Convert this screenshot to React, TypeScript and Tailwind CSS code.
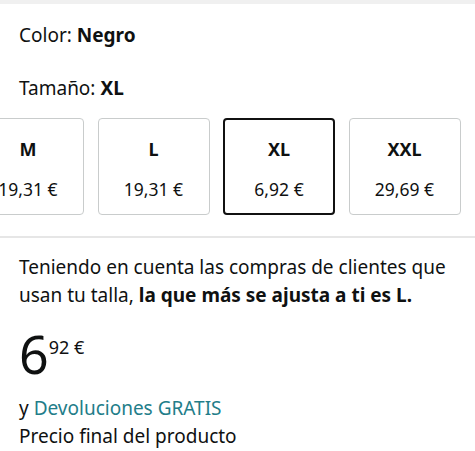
import React from "react";

const sizes = [
  { s: "M", p: "19,31 €", sel: false },
  { s: "L", p: "19,31 €", sel: false },
  { s: "XL", p: "6,92 €", sel: true },
  { s: "XXL", p: "29,69 €", sel: false },
];

export default function App() {
  return (
    <div
      className="w-[475px] h-[451px] overflow-hidden bg-white text-[#0f1111]"
      style={{ fontFamily: '"Noto Sans", "Open Sans", Arial, sans-serif' }}
    >
      <div className="h-[4px] bg-[#f0f0f0]" />
      <div className="px-[19px] mt-[17px] text-[19px] leading-[28px]">
        Color: <span className="font-bold">Negro</span>
      </div>
      <div className="px-[19px] mt-[25px] text-[19px] leading-[28px]">
        Tamaño: <span className="font-bold">XL</span>
      </div>
      <div className="mt-[16px] flex gap-[13.5px] ml-[-28px]">
        {sizes.map((x) => (
          <div
            key={x.s}
            className={
              "shrink-0 w-[112px] h-[97px] rounded-[4px] flex flex-col items-center bg-white " +
              (x.sel ? "border-2 border-[#111]" : "border border-[#c9cccc]")
            }
          >
            <div
              className={
                "font-bold text-[18px] leading-[24px] " +
                (x.sel ? "mt-[17px]" : "mt-[18px]")
              }
            >
              {x.s}
            </div>
            <div className="text-[17.5px] leading-[24px] mt-[16px]">{x.p}</div>
          </div>
        ))}
      </div>
      <div className="mt-[21px] h-[2px] bg-[#e6e6e6]" />
      <div className="px-[19px] mt-[15px] text-[19px] leading-[28px]">
        Teniendo en cuenta las compras de clientes que usan tu talla,{" "}
        <span className="font-bold">la que más se ajusta a ti es L.</span>
      </div>
      <div className="px-[19px] mt-[19px] flex items-start">
        <span className="text-[52px] leading-[52px]">6</span>
        <span className="text-[18px] leading-[20px] mt-[9px]">92 €</span>
      </div>
      <div className="px-[19px] mt-[14px] text-[19px] leading-[28px]">
        y <span className="text-[#227d89]">Devoluciones GRATIS</span>
      </div>
      <div className="px-[19px] text-[19px] leading-[28px]">Precio final del producto</div>
    </div>
  );
}
